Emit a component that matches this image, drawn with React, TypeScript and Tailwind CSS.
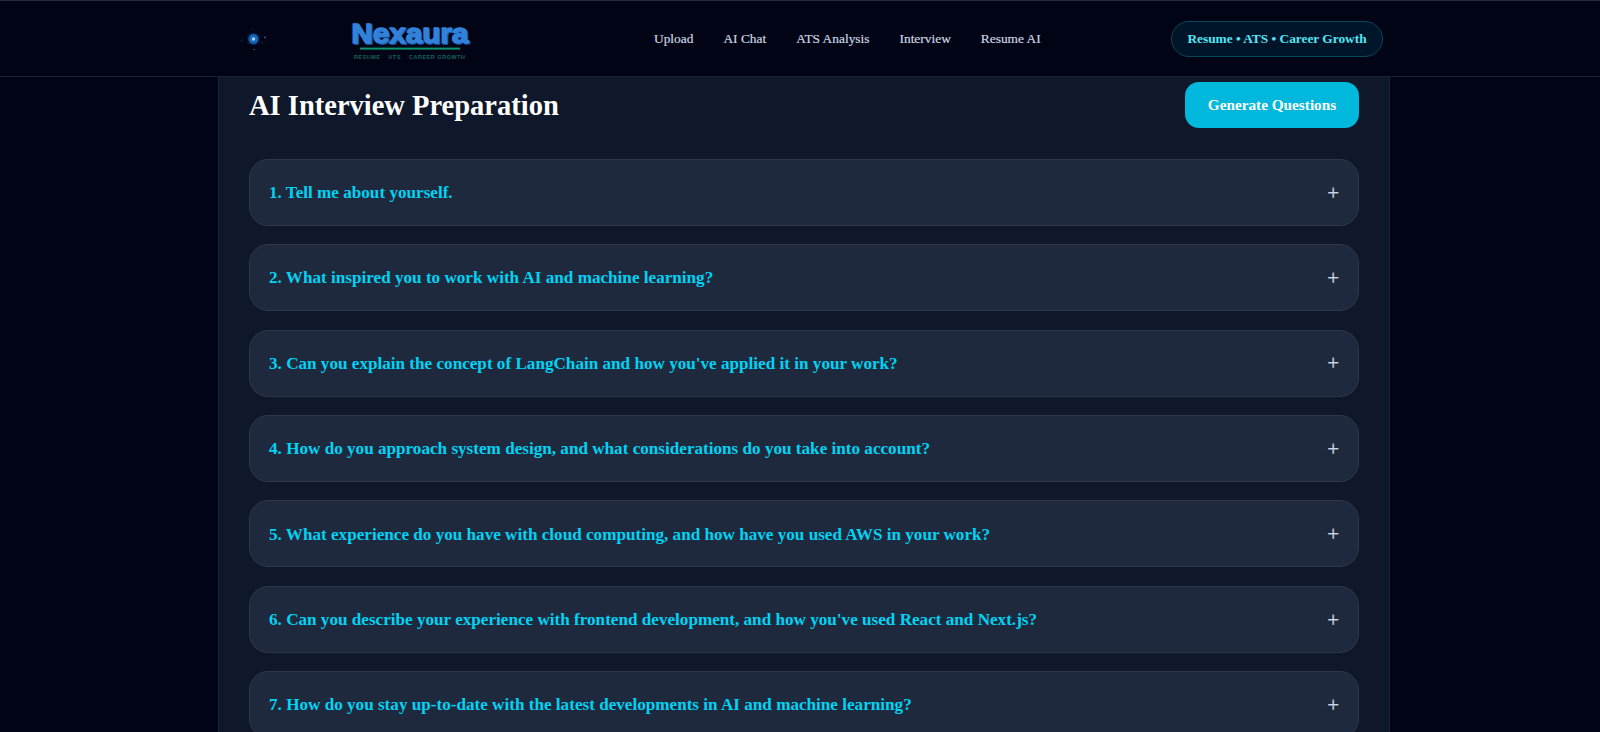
import React, { useState } from "react";

const navItems = ["Upload", "AI Chat", "ATS Analysis", "Interview", "Resume AI"];

const questionList = [
  "Tell me about yourself.",
  "What inspired you to work with AI and machine learning?",
  "Can you explain the concept of LangChain and how you've applied it in your work?",
  "How do you approach system design, and what considerations do you take into account?",
  "What experience do you have with cloud computing, and how have you used AWS in your work?",
  "Can you describe your experience with frontend development, and how you've used React and Next.js?",
  "How do you stay up-to-date with the latest developments in AI and machine learning?",
];

const AtomIcon = () => (
  <svg width="30" height="26" viewBox="0 0 30 26" fill="none">
    <ellipse cx="15.5" cy="13" rx="12" ry="5" stroke="#0b1830" strokeWidth="0.6" />
    <circle cx="15.5" cy="13" r="6" fill="#0b3f86" opacity="0.55" />
    <circle cx="15.5" cy="13" r="4.8" fill="#1765b8" />
    <circle cx="15.5" cy="13" r="1.7" fill="#a9d4f5" />
    <circle cx="27" cy="11.4" r="0.8" fill="#52708f" />
    <circle cx="3.5" cy="15" r="0.6" fill="#36506f" />
    <circle cx="24.5" cy="17" r="0.6" fill="#36506f" />
    <circle cx="16.3" cy="23.5" r="0.7" fill="#45617f" />
    <circle cx="14.5" cy="3" r="0.5" fill="#2b4261" />
  </svg>
);

const Wordmark = () => (
  <svg
    width="124"
    height="44"
    viewBox="0 0 124 44"
    fontFamily="'Liberation Sans', Arial, sans-serif"
  >
    <g fontSize="27" fontWeight="700" strokeWidth="1.3" strokeLinejoin="round">
      <text x="4.5" y="26.8" textLength="117" lengthAdjust="spacingAndGlyphs" fill="#1b5cae" stroke="#1b5cae">
        Nexaura
      </text>
      <text x="3.3" y="25.6" textLength="117" lengthAdjust="spacingAndGlyphs" fill="#3382da" stroke="#3382da">
        Nexaura
      </text>
    </g>
    <rect x="12" y="30.6" width="100" height="2" fill="#0c9670" />
    <g fontSize="5.4" fontWeight="700" fill="#0e6661">
      <text x="6" y="42.3" textLength="26">RESUME</text>
      <text x="40.5" y="42.3" textLength="12">ATS</text>
      <text x="61" y="42.3" textLength="56">CAREER GROWTH</text>
    </g>
  </svg>
);

const App = () => {
  const [openIndex, setOpenIndex] = useState<number | null>(null);

  const handleToggle = (index: number) => {
    setOpenIndex(openIndex === index ? null : index);
  };

  return (
    <div className="h-[732px] overflow-hidden bg-[#000416] font-['Liberation_Serif',serif]">
      <header className="h-[77px] border-t border-b border-t-[#242b38] border-b-[#1a2232] bg-[#010414]">
        <div className="ml-[218px] flex h-full w-[1172px] items-center pr-[7px] pl-[20px]">
          <div className="flex items-center gap-[80px]">
            <AtomIcon />
            <Wordmark />
          </div>

          <nav className="ml-[182px] flex items-center gap-[30px] pt-px">
            {navItems.map((item) => (
              <a
                key={item}
                href="#"
                className="text-[13.4px] font-medium whitespace-nowrap text-[#cbd5e1] [-webkit-text-stroke:0.2px]"
              >
                {item}
              </a>
            ))}
          </nav>

          <div className="ml-auto flex h-[36px] w-[212px] items-center justify-center rounded-full border border-[#06485a] bg-[#01152a] pt-px text-[13.35px] font-bold whitespace-nowrap text-[#53e5f5]">
            Resume • ATS • Career Growth
          </div>
        </div>
      </header>

      <main className="ml-[218px] h-[700px] w-[1172px] border-x border-[#1c2536] bg-[#0f172a] px-[30px]">
        <div className="flex items-center justify-between pt-[5.4px]">
          <h1 className="pt-[2px] text-[28.5px] font-bold text-white">
            AI Interview Preparation
          </h1>
          <button className="h-[46px] w-[174px] rounded-[14px] bg-[#00b8db] pt-px text-[15.25px] font-bold text-white">
            Generate Questions
          </button>
        </div>

        <div className="mt-[30.4px] flex flex-col gap-[18.3px]">
          {questionList.map((question, index) => (
            <div
              key={index}
              className="rounded-[19px] border border-[#2d384a] bg-[#1e293d]"
            >
              <button
                onClick={() => handleToggle(index)}
                className="flex h-[65.1px] w-full items-center justify-between px-[19px] text-left"
              >
                <span className="pt-px text-[17.14px] font-bold text-[#00d3f3]">
                  {index + 1}. {question}
                </span>
                <span className="pt-[2px] text-[21px] text-[#cbd5e1] [-webkit-text-stroke:0.3px]">
                  {openIndex === index ? "−" : "+"}
                </span>
              </button>
            </div>
          ))}
        </div>
      </main>
    </div>
  );
};

export default App;
